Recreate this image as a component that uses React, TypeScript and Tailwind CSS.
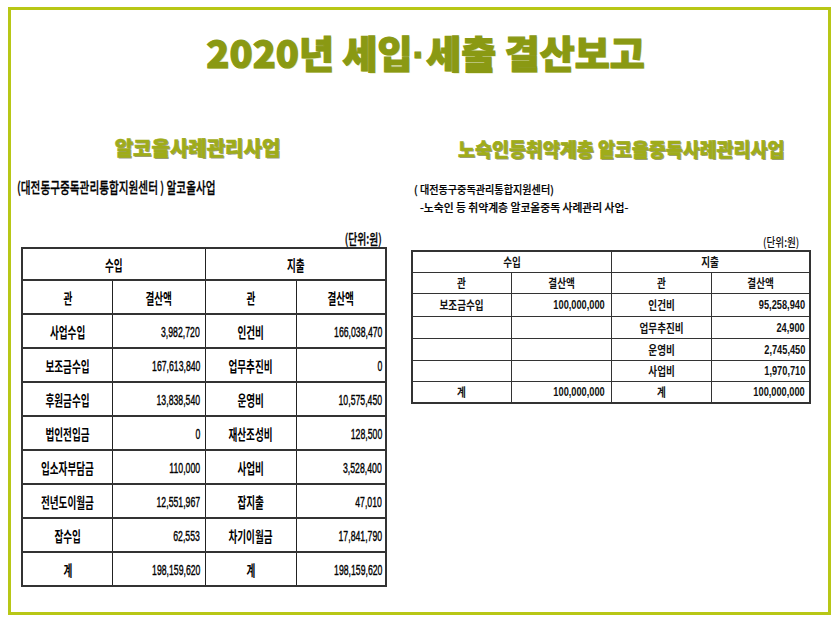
import React from "react";

const L: string[][] = [
  ["사업수입", "3,982,720", "인건비", "166,038,470"],
  ["보조금수입", "167,613,840", "업무추진비", "0"],
  ["후원금수입", "13,838,540", "운영비", "10,575,450"],
  ["법인전입금", "0", "재산조성비", "128,500"],
  ["입소자부담금", "110,000", "사업비", "3,528,400"],
  ["전년도이월금", "12,551,967", "잡지출", "47,010"],
  ["잡수입", "62,553", "차기이월금", "17,841,790"],
  ["계", "198,159,620", "계", "198,159,620"],
];

const R: string[][] = [
  ["보조금수입", "100,000,000", "인건비", "95,258,940"],
  ["", "", "업무추진비", "24,900"],
  ["", "", "운영비", "2,745,450"],
  ["", "", "사업비", "1,970,710"],
  ["계", "100,000,000", "계", "100,000,000"],
];

const RH = ["h-[23px]", "h-[22px]", "h-[22px]", "h-[21px]", "h-[20px]"];

function LK({ t }: { t: string }) {
  return (
    <span className="inline-block whitespace-nowrap font-['Noto_Sans_CJK_KR',sans-serif] font-bold text-[15px] leading-none text-[#000] scale-x-[0.64]">
      {t}
    </span>
  );
}

function LN({ t }: { t: string }) {
  return (
    <span className="inline-block whitespace-nowrap origin-right font-['Liberation_Sans',sans-serif] text-[15px] leading-none text-[#000] scale-x-[0.58] [-webkit-text-stroke:0.4px_#000]">
      {t}
    </span>
  );
}

function RK({ t }: { t: string }) {
  return (
    <span className="inline-block whitespace-nowrap font-['Noto_Sans_CJK_KR',sans-serif] font-bold text-[12px] leading-none text-[#111] scale-x-[0.8]">
      {t}
    </span>
  );
}

function RN({ t }: { t: string }) {
  return (
    <span className="inline-block whitespace-nowrap origin-right font-['Liberation_Sans',sans-serif] font-bold text-[12px] leading-none text-[#111] scale-x-[0.77]">
      {t}
    </span>
  );
}

function LeftTable() {
  return (
    <div className="ml-[4px] w-[366px] border-2 border-[#333] bg-white">
      <div className="flex h-[32px] border-b-2 border-[#333]">
        <div className="flex w-[183px] items-center justify-center border-r border-[#222]">
          <LK t="수입" />
        </div>
        <div className="flex flex-1 items-center justify-center">
          <LK t="지출" />
        </div>
      </div>
      <div className="flex h-[34px] border-b-2 border-[#333]">
        <div className="flex w-[90px] items-center justify-center border-r border-[#222]">
          <LK t="관" />
        </div>
        <div className="flex w-[93px] items-center justify-center border-r border-[#222]">
          <LK t="결산액" />
        </div>
        <div className="flex w-[91px] items-center justify-center border-r border-[#222]">
          <LK t="관" />
        </div>
        <div className="flex flex-1 items-center justify-center">
          <LK t="결산액" />
        </div>
      </div>
      {L.map((r, i) => (
        <div
          key={i}
          className={
            i === L.length - 1
              ? "flex h-[32px]"
              : "flex h-[34px] border-b-2 border-[#333]"
          }
        >
          <div className="flex w-[90px] items-center justify-center border-r border-[#222]">
            <LK t={r[0]} />
          </div>
          <div className="flex w-[93px] items-center justify-end border-r border-[#222] pr-[5px]">
            <LN t={r[1]} />
          </div>
          <div className="flex w-[91px] items-center justify-center border-r border-[#222]">
            <LK t={r[2]} />
          </div>
          <div className="flex flex-1 items-center justify-end pr-[3px]">
            <LN t={r[3]} />
          </div>
        </div>
      ))}
    </div>
  );
}

function RightTable() {
  return (
    <div className="w-[400px] border-2 border-[#333] bg-white">
      <div className="flex h-[21px] border-b border-[#333]">
        <div className="flex w-[199px] items-center justify-center border-r border-[#333]">
          <RK t="수입" />
        </div>
        <div className="flex flex-1 items-center justify-center">
          <RK t="지출" />
        </div>
      </div>
      <div className="flex h-[21px] border-b border-[#333]">
        <div className="flex w-[99px] items-center justify-center border-r border-[#333]">
          <RK t="관" />
        </div>
        <div className="flex w-[100px] items-center justify-center border-r border-[#333]">
          <RK t="결산액" />
        </div>
        <div className="flex w-[100px] items-center justify-center border-r border-[#333]">
          <RK t="관" />
        </div>
        <div className="flex flex-1 items-center justify-center">
          <RK t="결산액" />
        </div>
      </div>
      {R.map((r, i) => (
        <div
          key={i}
          className={
            i === R.length - 1
              ? `flex ${RH[i]}`
              : `flex ${RH[i]} border-b border-[#333]`
          }
        >
          <div className="flex w-[99px] items-center justify-center border-r border-[#333]">
            <RK t={r[0]} />
          </div>
          <div className="flex w-[100px] items-center justify-end border-r border-[#333] pr-[6px]">
            <RN t={r[1]} />
          </div>
          <div className="flex w-[100px] items-center justify-center border-r border-[#333]">
            <RK t={r[2]} />
          </div>
          <div className="flex flex-1 items-center justify-end pr-[4px]">
            <RN t={r[3]} />
          </div>
        </div>
      ))}
    </div>
  );
}

export default function App() {
  return (
    <div className="min-h-[621px] w-[838px] bg-white pl-[8px] pt-[7px]">
      <div className="h-[608px] w-[823px] border-[3px] border-[#b8c716] bg-white">
        <div className="flex h-[120px] justify-center pl-[12px] pt-[19px]">
          <h1 className="h-[46px] whitespace-nowrap font-['Noto_Sans_CJK_KR',sans-serif] text-[38px] font-black leading-[46px] text-[#8a9913] [-webkit-text-stroke:1.2px_#8a9913] [text-shadow:1px_1px_0_#dfe6b0]">
            2020년 세입<span className="font-['Liberation_Sans',sans-serif] tracking-[1px]">·</span>세출 결산보고
          </h1>
        </div>
        <div className="flex pl-[6px]">
          <div className="flex w-[369px] flex-col">
            <div className="flex h-[35px] items-center justify-center pr-[8px]">
              <span className="inline-block whitespace-nowrap font-['Noto_Sans_CJK_KR',sans-serif] text-[20px] font-black leading-none text-[#9fac1a] [-webkit-text-stroke:0.6px_#9fac1a] [text-shadow:1px_1px_0_#9a9a8a]">
                알코올사례관리사업
              </span>
            </div>
            <div className="mt-[9px] flex h-[24px] items-center">
              <span className="inline-block origin-left whitespace-nowrap font-['Noto_Sans_CJK_KR',sans-serif] text-[15px] font-medium leading-none text-[#000] scale-x-[0.71] [-webkit-text-stroke:0.3px_#000]">
                (대전동구중독관리통합지원센터 ) 알코올사업
              </span>
            </div>
            <div className="mt-[30px] flex h-[19px] items-center justify-end pr-[4px]">
              <span className="inline-block origin-right whitespace-nowrap font-['Noto_Sans_CJK_KR',sans-serif] text-[14px] font-medium leading-none text-[#000] scale-x-[0.7] [-webkit-text-stroke:0.3px_#000]">
                (단위:원)
              </span>
            </div>
            <LeftTable />
          </div>
          <div className="ml-[25px] flex w-[400px] flex-col">
            <div className="flex h-[37px] items-center justify-center pl-[20px]">
              <span className="inline-block whitespace-nowrap font-['Noto_Sans_CJK_KR',sans-serif] text-[19px] font-black leading-none text-[#9fac1a] scale-x-[0.97] [-webkit-text-stroke:0.6px_#9fac1a] [text-shadow:1px_1px_0_#9a9a8a]">
                노숙인등취약계층 알코올중독사례관리사업
              </span>
            </div>
            <div className="mt-[13px] flex h-[18px] items-center pl-[3px]">
              <span className="inline-block origin-left whitespace-nowrap font-['Noto_Sans_CJK_KR',sans-serif] text-[11px] font-medium leading-none text-[#000] scale-x-[0.92] [-webkit-text-stroke:0.2px_#000]">
                ( 대전동구중독관리통합지원센터)
              </span>
            </div>
            <div className="flex h-[18px] items-center pl-[9px]">
              <span className="inline-block origin-left whitespace-pre font-['Noto_Sans_CJK_KR',sans-serif] text-[11px] font-medium leading-none text-[#000] scale-x-[0.98] [-webkit-text-stroke:0.2px_#000]">
                -노숙인 등 취약계층 알코올중독 사례관리 사업-
              </span>
            </div>
            <div className="mt-[18px] flex h-[16px] items-center justify-end pr-[12px]">
              <span className="inline-block origin-right whitespace-nowrap font-['Noto_Sans_CJK_KR',sans-serif] text-[12px] font-medium leading-none text-[#111] scale-x-[0.8]">
                (단위:원)
              </span>
            </div>
            <RightTable />
          </div>
        </div>
      </div>
    </div>
  );
}
